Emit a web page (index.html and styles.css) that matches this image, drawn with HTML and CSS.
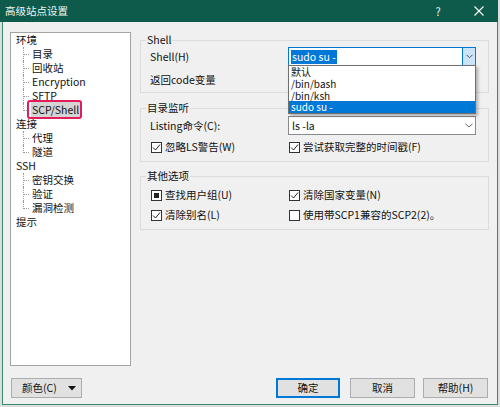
FILE: index.html
```html
<!DOCTYPE html>
<html lang="zh-CN">
<head>
<meta charset="utf-8">
<title>高级站点设置</title>
<link rel="stylesheet" href="styles.css">
</head>
<body>
<div class="window">
  <div class="titlebar">
    <span class="title">高级站点设置</span>
    <span class="tb-help">?</span>
    <svg class="tb-close" width="10" height="10" viewBox="0 0 10 10"><path d="M0.5 0.5 L9.5 9.5 M9.5 0.5 L0.5 9.5" stroke="#fff" stroke-width="1.1" fill="none"/></svg>
  </div>
  <div class="frame">
    <div class="content">
      <ul class="tree">
        <li><span class="lbl">环境</span>
          <ul class="sub">
            <li>目录</li>
            <li>回收站</li>
            <li>Encryption</li>
            <li>SFTP</li>
            <li><span class="sel">SCP/Shell</span><span class="mark"></span></li>
          </ul>
        </li>
        <li><span class="lbl">连接</span>
          <ul class="sub">
            <li>代理</li>
            <li>隧道</li>
          </ul>
        </li>
        <li><span class="lbl">SSH</span>
          <ul class="sub">
            <li>密钥交换</li>
            <li>验证</li>
            <li>漏洞检测</li>
          </ul>
        </li>
        <li><span class="lbl">提示</span></li>
      </ul>
      <div class="panel">
        <fieldset class="group g-shell">
          <legend>Shell</legend>
          <div class="grid">
            <span class="label">Shell(H)</span>
            <div class="combo focus">
              <span class="val selected-text">sudo su -</span>
              <span class="arrow"><svg width="7" height="5" viewBox="0 0 7 5"><path d="M0.5 0.8 L3.5 3.8 L6.5 0.8" stroke="#555" fill="none"/></svg></span>
              <ul class="dropdown">
                <li>默认</li>
                <li>/bin/bash</li>
                <li>/bin/ksh</li>
                <li class="active">sudo su -</li>
              </ul>
            </div>
            <span class="label">返回code变量</span>
          </div>
        </fieldset>
        <fieldset class="group g-dir">
          <legend>目录监听</legend>
          <div class="grid">
            <span class="label">Listing命令(C):</span>
            <div class="combo">
              <span class="val">ls -la</span>
              <span class="arrow"><svg width="8" height="5" viewBox="0 0 8 5"><path d="M0.5 0.8 L4 4 L7.5 0.8" stroke="#666" fill="none"/></svg></span>
            </div>
            <label class="cb"><span class="box"><svg width="9" height="9" viewBox="0 0 9 9"><path d="M1 4.5 L3.5 7 L8 1.5" stroke="#222" fill="none"/></svg></span>忽略LS警告(W)</label>
            <label class="cb"><span class="box"><svg width="9" height="9" viewBox="0 0 9 9"><path d="M1 4.5 L3.5 7 L8 1.5" stroke="#222" fill="none"/></svg></span>尝试获取完整的时间戳(F)</label>
          </div>
        </fieldset>
        <fieldset class="group g-other">
          <legend>其他选项</legend>
          <div class="grid">
            <label class="cb"><span class="box"><span class="indet"></span></span>查找用户组(U)</label>
            <label class="cb"><span class="box"><svg width="9" height="9" viewBox="0 0 9 9"><path d="M1 4.5 L3.5 7 L8 1.5" stroke="#222" fill="none"/></svg></span>清除国家变量(N)</label>
            <label class="cb"><span class="box"><svg width="9" height="9" viewBox="0 0 9 9"><path d="M1 4.5 L3.5 7 L8 1.5" stroke="#222" fill="none"/></svg></span>清除别名(L)</label>
            <label class="cb"><span class="box"></span>使用带SCP1兼容的SCP2(2)。</label>
          </div>
        </fieldset>
      </div>
    </div>
    <div class="footer">
      <button class="btn btn-color"><span>颜色(C)</span><svg width="8" height="5" viewBox="0 0 8 5"><path d="M0 0 L8 0 L4 4.5 Z" fill="#111"/></svg></button>
      <span class="spacer"></span>
      <button class="btn btn-ok">确定</button>
      <button class="btn">取消</button>
      <button class="btn">帮助(H)</button>
    </div>
  </div>
</div>
</body>
</html>
```

FILE: styles.css
```css
html, body {
  margin: 0;
  padding: 0;
}
body {
  background: #dedede;
  font-family: "Noto Sans CJK SC", "Noto Sans", sans-serif;
  font-size: 10.5px;
  color: #111;
}
.window {
  width: 498px;
}
.titlebar {
  height: 22px;
  background: #0e5b4b;
  color: #eef5f2;
  display: flex;
  align-items: center;
  padding: 0 14px 0 5px;
  box-sizing: border-box;
}
.title {
  flex: 1;
  line-height: 14px;
  font-size: 10.5px;
}
.tb-help {
  width: 10px;
  text-align: center;
  margin-right: 31px;
  font-size: 11px;
  line-height: 14px;
}
.tb-close {
  display: block;
}
.frame {
  margin-left: 2px;
  border: 1px solid #3a8a70;
  border-top: 0;
  background: #f0f0f0;
  padding: 10px 8px 6px 7px;
}
.content {
  display: flex;
  gap: 9px;
  height: 334px;
}
.tree {
  width: 121px;
  box-sizing: border-box;
  border: 1px solid #a3a3a3;
  background: #fff;
  margin: 0;
  padding: 0 5px;
  list-style: none;
  line-height: 14px;
}
.tree li {
  line-height: 14px;
}
.sub {
  list-style: none;
  margin: 0;
  padding: 0;
}
.sub li {
  position: relative;
  padding-left: 16px;
}
.sub li::before {
  content: "";
  position: absolute;
  left: 7px;
  top: 0;
  width: 5px;
  height: 7px;
  border-left: 1px dotted #9a9a9a;
  border-bottom: 1px dotted #9a9a9a;
}
.sub li:not(:last-child)::after {
  content: "";
  position: absolute;
  left: 7px;
  top: 7px;
  bottom: 0;
  border-left: 1px dotted #9a9a9a;
}
.sel {
  background: #d4d4d4;
  padding: 0 1px;
  margin-left: -1px;
}
.mark {
  position: absolute;
  left: 11px;
  top: -3px;
  width: 55px;
  height: 19px;
  box-sizing: border-box;
  border: 2px solid #e41c5a;
  border-radius: 3px;
}
.panel {
  flex: 1;
  padding-top: 1px;
}
.group {
  margin: 0;
  border: 1px solid #dcdcdc;
  padding: 0 5px 7px;
  min-width: 0;
}
.group legend {
  padding: 0 1px;
  line-height: 14px;
}
.g-shell {
  padding-bottom: 5px;
}
.g-dir {
  margin-top: 8px;
}
.g-other {
  margin-top: 7px;
}
.grid {
  display: grid;
  grid-template-columns: 138px 188px;
  align-items: center;
  padding-left: 4px;
  line-height: 14px;
}
.g-shell .grid {
  grid-template-rows: 19px 14px;
  row-gap: 7px;
}
.g-dir .grid {
  grid-template-rows: 19px 14px;
  row-gap: 5px;
  padding-top: 1px;
}
.g-other .grid {
  grid-template-rows: 14px 14px;
  row-gap: 6px;
  padding-top: 5px;
}
.combo {
  position: relative;
  height: 19px;
  box-sizing: border-box;
  border: 1px solid #8a8a8a;
  background: #fff;
  display: flex;
  align-items: center;
}
.combo .val {
  margin-left: 2px;
  padding: 0 1px;
  line-height: 14px;
}
.combo .arrow {
  margin-left: auto;
  width: 13px;
  height: 100%;
  display: flex;
  align-items: center;
  justify-content: center;
  box-sizing: border-box;
}
.combo.focus {
  border-color: #0078d7;
}
.combo.focus .arrow {
  background: #cce4f7;
  border-left: 1px solid #0078d7;
}
.selected-text {
  background: #0078d7;
  color: #fff;
}
.dropdown {
  position: absolute;
  left: -1px;
  top: 17px;
  width: 188px;
  box-sizing: border-box;
  margin: 0;
  padding: 0;
  list-style: none;
  background: #fff;
  border: 1px solid #6f6f6f;
  box-shadow: 2px 2px 3px rgba(0, 0, 0, 0.28);
  z-index: 2;
}
.dropdown li {
  line-height: 11.75px;
  height: 11.75px;
  padding-left: 2px;
  font-size: 10px;
}
.dropdown li.active {
  background: #0078d7;
  color: #fff;
}
.cb {
  display: flex;
  align-items: center;
  gap: 3px;
  margin-left: 1px;
  white-space: nowrap;
}
.box {
  width: 11px;
  height: 11px;
  box-sizing: border-box;
  border: 1px solid #333;
  background: #fff;
  display: flex;
  align-items: center;
  justify-content: center;
  flex: none;
}
.box svg {
  display: block;
}
.indet {
  width: 5px;
  height: 5px;
  background: #222;
}
.footer {
  display: flex;
  margin: 12px 1px 0 1px;
  height: 20px;
}
.spacer {
  flex: 1;
}
.btn {
  height: 20px;
  width: 65px;
  box-sizing: border-box;
  border: 1px solid #adadad;
  background: #e1e1e1;
  font-family: inherit;
  font-size: 10.5px;
  color: #111;
  line-height: 16px;
  padding: 0;
  margin-left: 8px;
}
.btn-ok {
  border: 2px solid #0078d7;
  width: 64px;
  margin-right: 2px;
}
.btn-color {
  width: 71px;
  margin-left: 0;
  display: flex;
  align-items: center;
  justify-content: space-between;
  padding: 0 5px 0 10px;
}
.btn-color svg {
  display: block;
}
```
